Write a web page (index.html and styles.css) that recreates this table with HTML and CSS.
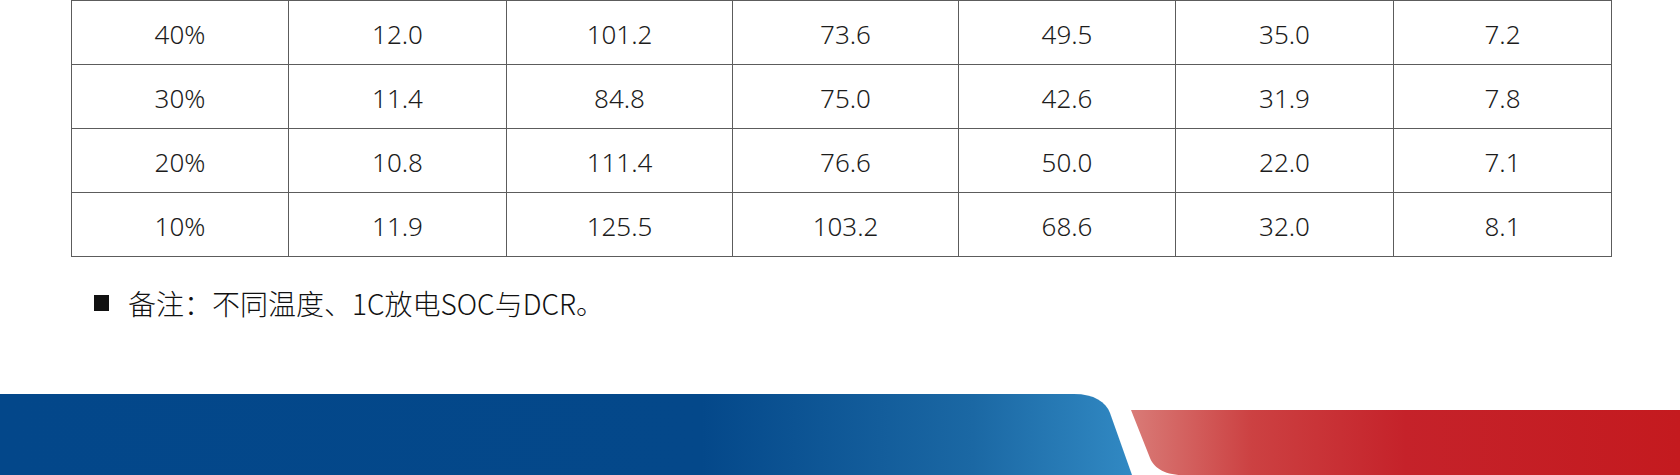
FILE: index.html
```html
<html>
<link rel="stylesheet" href="styles.css">

<head>
    <title>SOC - DCR</title>
</head>

<body>
    <table class="dados">
        <colgroup>
            <col class="c1"><col class="c2"><col class="c3"><col class="c4"><col class="c5"><col class="c6"><col class="c7">
        </colgroup>
        <tr>
            <td>40%</td><td>12.0</td><td>101.2</td><td>73.6</td><td>49.5</td><td>35.0</td><td>7.2</td>
        </tr>
        <tr>
            <td>30%</td><td>11.4</td><td>84.8</td><td>75.0</td><td>42.6</td><td>31.9</td><td>7.8</td>
        </tr>
        <tr>
            <td>20%</td><td>10.8</td><td>111.4</td><td>76.6</td><td>50.0</td><td>22.0</td><td>7.1</td>
        </tr>
        <tr>
            <td>10%</td><td>11.9</td><td>125.5</td><td>103.2</td><td>68.6</td><td>32.0</td><td>8.1</td>
        </tr>
    </table>

    <p class="nota"><span class="marca"></span>备注：不同温度、1C放电SOC与DCR。</p>

    <svg class="faixa" width="1680" height="81" viewBox="0 0 1680 81">
        <defs>
            <linearGradient id="azul" gradientUnits="userSpaceOnUse" x1="0" y1="0" x2="1132" y2="0">
                <stop offset="0" stop-color="#03478a"/>
                <stop offset="0.62" stop-color="#04488a"/>
                <stop offset="0.86" stop-color="#1b68a4"/>
                <stop offset="1" stop-color="#3189c3"/>
            </linearGradient>
            <linearGradient id="vermelho" gradientUnits="userSpaceOnUse" x1="1131" y1="0" x2="1680" y2="0">
                <stop offset="0" stop-color="#d97b77"/>
                <stop offset="0.22" stop-color="#cc4142"/>
                <stop offset="0.5" stop-color="#c5222a"/>
                <stop offset="1" stop-color="#c41a1f"/>
            </linearGradient>
        </defs>
        <path d="M0 0 H1074 C1094 0 1106 8 1110 19 L1132 81 H0 Z" fill="url(#azul)"/>
        <path d="M1131 16 H1680 V81 H1182 C1163 81 1153 72 1150 64 Z" fill="url(#vermelho)"/>
    </svg>
</body>

</html>
```

FILE: styles.css
```css
body {
    margin: 0;
    width: 1680px;
    height: 475px;
    display: flex;
    flex-direction: column;
    background-color: white;
    overflow: hidden;
}

.dados {
    margin-left: 71px;
    width: 1540px;
    border-collapse: collapse;
    table-layout: fixed;
    font-family: "Noto Sans", sans-serif;
    font-size: 26px;
    font-weight: 300;
    color: #1c1c1c;
}

.c1 { width: 217px; }
.c2 { width: 218px; }
.c3 { width: 226px; }
.c4 { width: 226px; }
.c5 { width: 217px; }
.c6 { width: 218px; }
.c7 { width: 218px; }

.dados td {
    border: 1px solid #5c5c5c;
    height: 64px;
    padding: 3px 0 0 0;
    box-sizing: border-box;
    text-align: center;
    line-height: 30px;
}

.nota {
    margin: 28px 0 0 94px;
    display: flex;
    align-items: center;
    font-family: "Noto Sans CJK SC", sans-serif;
    font-size: 28px;
    font-weight: 300;
    line-height: 36px;
    color: #111;
}

.marca {
    width: 15px;
    height: 16px;
    margin-right: 19px;
    background-color: #111;
}

.faixa {
    display: block;
    margin-top: auto;
}
```
